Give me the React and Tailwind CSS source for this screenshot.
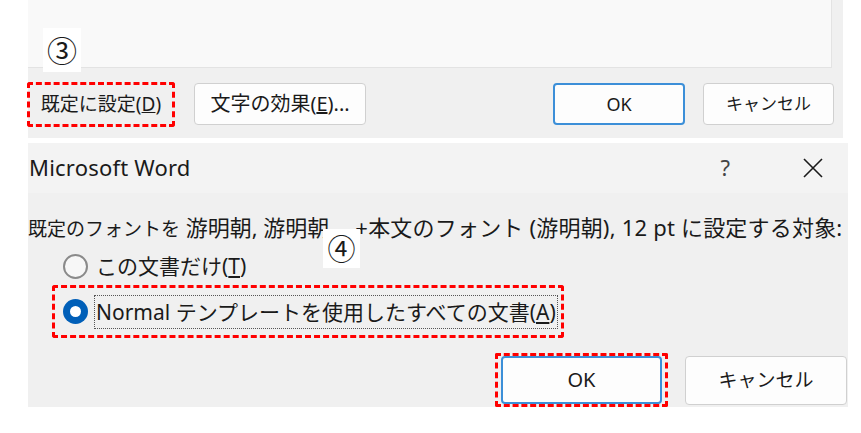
import React from 'react';

const FONT = { fontFamily: '"Noto Sans", "Noto Sans CJK JP", sans-serif' };

function Btn({ children, primary, className = '' }) {
  return (
    <div
      className={`flex items-center justify-center rounded-[4px] bg-[#fdfdfd] text-[#1a1a1a] ${
        primary ? 'border-2 border-[#3c8fd8]' : 'border border-[#d0d0d0]'
      } ${className}`}
    >
      {children}
    </div>
  );
}

function Radio({ checked }) {
  return checked ? (
    <div className="w-[25px] h-[25px] rounded-full bg-[#005fb8] flex items-center justify-center shrink-0">
      <div className="w-[11px] h-[11px] rounded-full bg-white" />
    </div>
  ) : (
    <div className="w-[25px] h-[25px] rounded-full border-2 border-[#8a8a8a] bg-[#f7f7f7] shrink-0" />
  );
}

export default function App() {
  return (
    <div className="w-[861px] h-[433px] bg-white relative overflow-hidden" style={FONT}>
      {/* Font dialog bottom */}
      <div className="ml-[28px] w-[815px] h-[138px] bg-[#f0f0f0] flex flex-col">
        <div className="w-[804px] h-[68px] bg-[#f9f9f9] border-r border-b border-[#e3e3e3]" />
        <div className="flex items-center mt-[14px] h-[44px]">
          <div className="ml-[-1px] border-[3px] border-dashed border-[#ff0000] rounded-[3px] h-[45px] w-[148px] flex items-center justify-center">
            <span className="text-[19px] text-[#1a1a1a] leading-none">既定に設定(<u>D</u>)</span>
          </div>
          <Btn className="ml-[19px] w-[172px] h-[42px] text-[20px]">
            文字の効果(<u>E</u>)...
          </Btn>
          <Btn primary className="ml-[187px] w-[132px] h-[42px] text-[18px]">
            OK
          </Btn>
          <Btn className="ml-[18px] w-[131px] h-[42px] text-[17px]">
            キャンセル
          </Btn>
        </div>
      </div>

      {/* Microsoft Word dialog */}
      <div className="mt-[5px] ml-[28px] w-[820px] h-[264px] bg-[#f0f0f0] flex flex-col">
        <div className="h-[50px] bg-[#f3f3f3] flex items-center text-[#1a1a1a]">
          <span className="ml-[1px] text-[22px] tracking-[0.2px]">Microsoft Word</span>
          <span className="ml-auto text-[22px] text-[#444] mr-[72px]">?</span>
          <svg width="22" height="22" viewBox="0 0 22 22" className="mr-[24px]">
            <path d="M2 2 L20 20 M20 2 L2 20" stroke="#1a1a1a" strokeWidth="1.6" />
          </svg>
        </div>
        <div className="flex items-baseline text-[#1a1a1a] mt-[20px] leading-[28px] whitespace-pre">
          <span className="text-[19px]">既定のフォントを</span>
          <span className="text-[22px]"> 游明朝, 游明朝</span>
          <span className="ml-[26px] text-[22px] tracking-[0.2px]">+本文のフォント (游明朝), 12 pt に設定する対象:</span>
        </div>
        <div className="flex items-center ml-[35px] mt-[8px] gap-[8px] text-[21px] text-[#1a1a1a]">
          <Radio />
          <span>この文書だけ(<u>T</u>)</span>
        </div>
        <div className="ml-[24px] mt-[3px] w-[512px] h-[53px] border-[3px] border-dashed border-[#ff0000] rounded-[3px] flex items-center">
          <div className="ml-[8px]">
            <Radio checked />
          </div>
          <span className="ml-[6px] border border-dotted border-[#555] px-[1px] text-[21px] leading-[32px] text-[#1a1a1a] whitespace-nowrap">
            Normal テンプレートを使用したすべての文書(<u>A</u>)
          </span>
        </div>
        <div className="flex items-center mt-[15px]">
          <div className="ml-[467px] w-[173px] h-[54px] border-[3px] border-dashed border-[#ff0000] rounded-[2px] flex items-center justify-center">
            <Btn primary className="w-[161px] h-[48px] text-[20px]">
              OK
            </Btn>
          </div>
          <Btn className="ml-[17px] w-[162px] h-[49px] text-[19px]">
            キャンセル
          </Btn>
        </div>
      </div>

      {/* step labels */}
      <div className="absolute left-[43px] top-[28px] w-[38px] h-[44px] bg-white flex items-center justify-center text-[30px] text-[#1a1a1a]">
        ③
      </div>
      <div className="absolute left-[323px] top-[229px] w-[37px] h-[39px] bg-white flex items-center justify-center text-[28px] text-[#1a1a1a]">
        ④
      </div>
    </div>
  );
}
